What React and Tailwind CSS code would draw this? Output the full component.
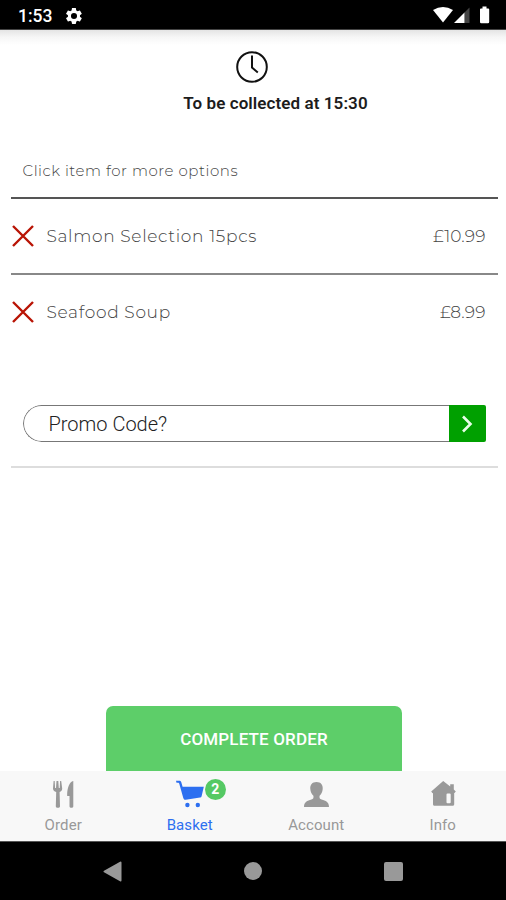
import { useState } from 'react'

const items = [
    { id: 1, name: 'Salmon Selection 15pcs', price: '£10.99' },
    { id: 2, name: 'Seafood Soup', price: '£8.99' },
]

function StatusBar() {
    return (
        <div className="flex h-[30px] items-center justify-between border-b border-[#444] bg-black pr-4 pl-[18px] text-white">
            <div className="flex items-center pt-[3px]">
                <span className="w-[48px] text-[17.5px] leading-5 font-medium">1:53</span>
                <svg className="h-4 w-4" viewBox="2 2 20 20" fill="currentColor">
                    <path
                        fillRule="evenodd"
                        d="M19.4 13c0-.3.1-.6.1-1s0-.7-.1-1l2.1-1.6c.2-.1.2-.4.1-.6l-2-3.5c-.1-.2-.4-.3-.6-.2l-2.5 1c-.5-.4-1.1-.7-1.7-1l-.4-2.6c0-.3-.2-.5-.5-.5h-4c-.3 0-.5.2-.5.5L9 5.1c-.6.3-1.2.6-1.7 1l-2.5-1c-.2-.1-.5 0-.6.2l-2 3.5c-.1.2-.1.4.1.6L4.500 11c-.1.3-.1.7-.1 1s0 .7.1 1l-2.2 1.600c-.2.1-.2.4-.1.6l2 3.5c.1.2.4.3.6.2l2.5-1c.5.4 1.1.7 1.7 1l.4 2.6c0 .3.2.5.5.5h4c.3 0 .5-.2.5-.5l.4-2.6c.6-.3 1.2-.6 1.7-1l2.5 1c.2.1.5 0 .6-.2l2-3.5c.1-.2.1-.4-.1-.6L19.4 13zM12 15.8a3.8 3.8 0 1 1 0-7.6 3.8 3.8 0 0 1 0 7.6z"
                    />
                </svg>
            </div>
            <svg className="mt-px h-[18px] w-[58px]" viewBox="0 0 58 18" fill="currentColor">
                <path d="M1 4Q11 -2 21 4L11 16.500Z" />
                <path d="M37.500 1.500V17H32.500V6.500Z" className="fill-[#444]" />
                <path d="M32.500 6.500V17H22Z" />
                <path d="M50.500 0.500h4v2h1.700a1 1 0 0 1 1 1V16a1.300 1.300 0 0 1-1.300 1.300h-6.600A1.300 1.300 0 0 1 48 16V3.500a1 1 0 0 1 1-1h1.500z" />
            </svg>
        </div>
    )
}

function OrderIcon() {
    return (
        <svg className="h-7 w-7" viewBox="0 0 28 28" fill="currentColor">
            <path d="M4.600 1h1.100l.4 7h.9l.5-7h1.800l.5 7h.9l.4-7h1.100l1 7.500c0 2-1 3-2.600 3.500l.4 14.300c0 2-4.200 2-4.200 0L7.200 12C5.300 11.500 4 10.500 4 8.500z" />
            <path d="M24.300 1v25.300c0 2-3.800 2-3.800 0V16h-2.300C17.800 10 20 1.500 24.300 1z" />
        </svg>
    )
}

function BasketIcon() {
    return (
        <svg className="h-7 w-7" viewBox="0 0 28 28" fill="currentColor">
            <path d="M0 .7h3.300c1 0 1.500.5 1.900 1.300L6.600 6.800h21.200L25.600 16.200c-.2.800-.7 1.200-1.500 1.400L9.700 19.800c-1.500.1-2.100-.6-2.500-2L3.200 3.500C3 3 2.800 2.800 2.400 2.800H.5z" />
            <circle cx="11.400" cy="25" r="2.200" />
            <circle cx="21.800" cy="25" r="2.200" />
        </svg>
    )
}

function AccountIcon() {
    return (
        <svg className="h-7 w-7" viewBox="0 0 28 28" fill="currentColor">
            <path d="M14.500 2c4.300 0 6.600 2.800 6.200 7-.3 3.200-1.500 5.400-3.100 6.800-.4 2 0 3.100 2 3.800 4 1.400 7.400 2.300 7.400 7.400H2c0-5.100 3.400-6 7.400-7.400 2-.7 2.400-1.800 2-3.800C9.800 14.400 8.600 12.200 8.300 9c-.4-4.200 1.900-7 6.200-7z" />
        </svg>
    )
}

function InfoIcon() {
    return (
        <svg className="h-7 w-7" viewBox="0 0 28 28" fill="currentColor">
            <path
                fillRule="evenodd"
                d="M14.200 1l7 5.600V4.300h3.600v5.300l2 1.800-1.300 1.700-.3-.2v11.300c0 .9-.6 1.500-1.500 1.500H5.500c-.9 0-1.500-.6-1.500-1.500V12.900l-.5.400L2.200 11.600zM18.500 13.600a1 1 0 0 0-1 1v7.700a1 1 0 0 0 1 1h2.200a1 1 0 0 0 1-1v-7.700a1 1 0 0 0-1-1z"
            />
        </svg>
    )
}

const tabs = [
    { key: 'order', label: 'Order', Icon: OrderIcon },
    { key: 'basket', label: 'Basket', Icon: BasketIcon, count: items.length },
    { key: 'account', label: 'Account', Icon: AccountIcon },
    { key: 'info', label: 'Info', Icon: InfoIcon },
]

export default function App() {
    const [active, setActive] = useState('basket')

    return (
        <div className="flex h-[900px] w-[506px] flex-col overflow-hidden bg-white font-[Roboto,sans-serif]">
            <StatusBar />

            <main className="flex flex-1 flex-col bg-[linear-gradient(#e4e4e4,#f6f6f6_7px,#fff_15px)] pr-[8.5px] pl-[10.5px]">
                <div className="flex flex-col items-center pt-[20px]">
                    <svg className="mr-[4px] h-[34px] w-[34px]" viewBox="0 0 34 34" fill="none" stroke="#111">
                        <circle cx="17" cy="17" r="14.800" strokeWidth="2" />
                        <path d="M17 5.500V17.500L22.800 22.500" strokeWidth="2" />
                    </svg>
                    {/* sits right of the clock's centre */}
                    <p className="mt-[9px] ml-[43px] text-[17px] leading-5 font-semibold tracking-[0.08px] text-[#1c1c1c]">
                        To be collected at 15:30
                    </p>
                </div>

                <p className="mt-[48px] pl-3 font-[Montserrat,Inter,sans-serif] text-[15px] leading-5 font-light tracking-[0.55px] text-[#444]">
                    Click item for more options
                </p>

                <ul className="mt-4">
                    {items.map((item, i) => (
                        <li
                            key={item.id}
                            className={`flex h-[76px] items-center border-t-2 pr-3 font-[Montserrat,Inter,sans-serif] text-[17px] font-light text-[#444] ${
                                i === 0 ? 'border-[#555]' : 'border-[#888]'
                            }`}
                        >
                            <svg className="h-6 w-6" viewBox="0 0 24 24" stroke="#b91405" strokeWidth="2.400">
                                <path d="M2 2L22 22M22 2L2 22" />
                            </svg>
                            <span className="ml-3 flex-1 pt-0.5 tracking-[0.67px]">{item.name}</span>
                            <span className="pt-0.5 tracking-[0.1px]">{item.price}</span>
                        </li>
                    ))}
                </ul>

                <div className="mt-[56px] px-3">
                    <div className="flex h-[37px] overflow-hidden rounded-l-full rounded-r-[3px]">
                        <div className="flex flex-1 items-center rounded-l-full border border-r-0 border-[#777] pl-[25px] text-[20px] font-light text-[#222]">
                            Promo Code?
                        </div>
                        <button className="flex w-[37px] items-center justify-center rounded-r-[2px] bg-[#00a000]">
                            <svg className="h-[18px] w-3" viewBox="0 0 12 18" fill="none" stroke="#e8ffe8" strokeWidth="2.600">
                                <path d="M2 1.500L9.500 9L2 16.500" />
                            </svg>
                        </button>
                    </div>
                </div>
                <hr className="mt-6 border-t-2 border-[#ddd]" />

                <button className="mx-auto mt-auto h-[65px] w-[296px] rounded-t-[7px] bg-[#5dce69] pt-0.5 text-[17px] font-medium tracking-[0.15px] text-white">
                    COMPLETE ORDER
                </button>
            </main>

            <nav className="flex h-[70px] bg-[#f8f8f8]">
                {tabs.map(({ key, label, Icon, count }) => (
                    <button
                        key={key}
                        onClick={() => setActive(key)}
                        className={`flex flex-1 flex-col items-center pt-[9px] ${
                            active === key ? 'text-[#2d6ff0]' : 'text-[#999]'
                        }`}
                    >
                        <span className="relative">
                            <Icon />
                            {count && (
                                <span className="absolute top-[-1px] left-[29px] flex h-[21px] w-[21px] items-center justify-center rounded-full bg-[#55c964] text-[14px] font-bold text-white">
                                    {count}
                                </span>
                            )}
                        </span>
                        <span className="mt-[7px] text-[15px] leading-5 tracking-[0.1px]">{label}</span>
                    </button>
                ))}
            </nav>

            <div className="flex h-[59px] items-center justify-center border-t border-[#555] bg-black text-[#999]">
                <div className="flex w-[300px] items-center justify-between">
                    <svg className="h-[21px] w-[19px]" viewBox="0 0 19 21" fill="currentColor">
                        <path d="M17.500.5a1 1 0 0 1 1 1v18a1 1 0 0 1-1.500.8L1 11.300a1 1 0 0 1 0-1.600z" />
                    </svg>
                    <span className="h-[18px] w-[18px] rounded-full bg-[#999]" />
                    <span className="h-[19px] w-[19px] rounded-[2px] bg-[#999]" />
                </div>
            </div>
        </div>
    )
}
